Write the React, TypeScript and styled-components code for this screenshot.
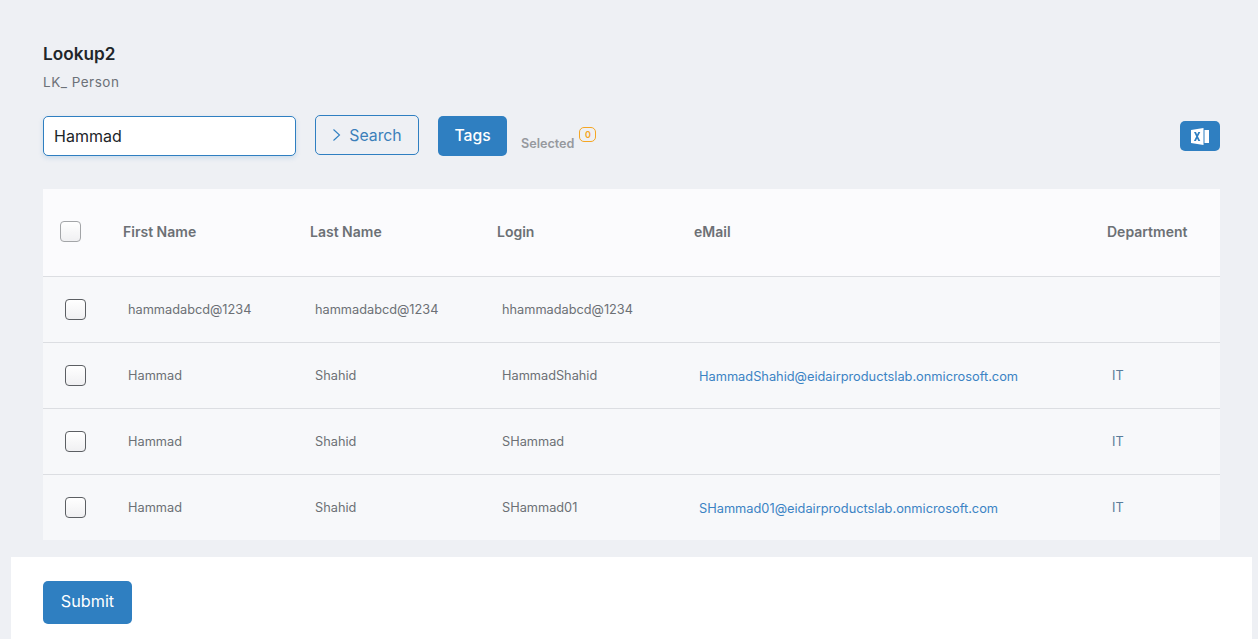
import React from "react";
import styled, { createGlobalStyle } from "styled-components";

const Global = createGlobalStyle`
  html, body { margin: 0; padding: 0; background: #eef0f4; }
  body { font-family: Inter, "Liberation Sans", sans-serif; overflow: hidden; }
  * { box-sizing: border-box; }
`;

const Page = styled.div`
  width: 1258px;
  height: 639px;
  display: flex;
  flex-direction: column;
  background: #eef0f4;
  overflow: hidden;
`;
const Content = styled.main`
  height: 557px;
  padding: 44px 38px 0 43px;
`;
const Title = styled.h1`
  margin: 0;
  font-size: 17.2px;
  line-height: 20px;
  font-weight: 600;
  color: #212529;
`;
const Subtitle = styled.p`
  margin: 9px 0 0;
  font-size: 13.5px;
  line-height: 18px;
  letter-spacing: 0.5px;
  color: #6c7178;
`;
const Toolbar = styled.div`
  display: flex;
  align-items: flex-start;
  margin-top: 24px;
  height: 41px;
`;
const SearchInput = styled.input`
  width: 253px;
  height: 40px;
  margin-top: 1px;
  padding: 0 10px;
  border: 1px solid #2f7fc1;
  border-radius: 5px;
  background: #fff;
  font: 400 16px Inter, sans-serif;
  color: #212529;
  box-shadow: 0 2px 5px rgba(47, 127, 193, 0.18);
  outline: none;
`;
const SearchButton = styled.button`
  width: 104px;
  height: 40px;
  margin-left: 19px;
  display: flex;
  align-items: center;
  justify-content: center;
  gap: 8px;
  border: 1px solid #2f7fc1;
  border-radius: 5px;
  background: transparent;
  color: #3b7fba;
  font: 400 15.8px Inter, sans-serif;
`;
const TagsButton = styled.button`
  width: 69px;
  height: 40px;
  margin: 1px 0 0 19px;
  padding: 0 0 2px;
  border: 0;
  border-radius: 5px;
  background: #2f7fc1;
  color: #fff;
  font: 500 15.7px Inter, sans-serif;
`;
const SelectedWrap = styled.div`
  display: flex;
  align-items: flex-start;
  margin: 13px 0 0 14px;
`;
const SelectedLabel = styled.span`
  margin-top: 8px;
  font-size: 12.6px;
  line-height: 15px;
  font-weight: 600;
  color: #96999e;
`;
const Badge = styled.span`
  width: 17px;
  height: 15px;
  margin: -1px 0 0 5px;
  border: 1px solid #f5a623;
  border-radius: 5px;
  color: #f5a623;
  font-size: 9px;
  font-weight: 600;
  line-height: 13px;
  text-align: center;
`;
const ExcelButton = styled.button`
  width: 40px;
  height: 30px;
  margin: 6px 0 0 auto;
  padding: 0 1px 0 0;
  display: flex;
  align-items: center;
  justify-content: center;
  border: 0;
  border-radius: 5px;
  background: #2f7fc1;
`;
const Table = styled.table`
  width: 1177px;
  margin-top: 33px;
  border-collapse: collapse;
  table-layout: fixed;
`;
const HeadRow = styled.tr`
  height: 87px;
  background: #fbfbfd;
`;
const Row = styled.tr`
  height: 66px;
  background: #f7f8fa;
  border-top: 1px solid #dcdee2;
`;
const Th = styled.th`
  padding: 0 0 2px;
  text-align: left;
  font-size: 14px;
  font-weight: 600;
  color: #6c7075;
`;
const Td = styled.td`
  padding: 0 0 0 5px;
  font-size: 12.75px;
  color: #6c7075;
`;
const CheckCell = styled.td`
  padding: 0;
`;
const MailCell = styled.td`
  padding: 2px 0 0 5px;
  font-size: 12.8px;
  color: #3b83c4;
`;
const DeptCell = styled.td`
  padding: 0 0 0 5px;
  font-size: 12.75px;
  color: #5a7c99;
`;
const Check = styled.span<{ $head?: boolean }>`
  display: block;
  width: 21px;
  height: 21px;
  margin-left: ${(p) => (p.$head ? "17px" : "22px")};
  border: 1px solid ${(p) => (p.$head ? "#a3a5a8" : "#5c5f63")};
  border-radius: 4px;
  background: linear-gradient(#ffffff, #f0f0f2);
`;
const Footer = styled.footer`
  height: 82px;
  margin: 0 6px 0 11px;
  padding: 24px 32px;
  background: #fff;
`;
const Submit = styled.button`
  width: 89px;
  height: 43px;
  padding: 0 0 3px;
  border: 0;
  border-radius: 5px;
  background: #2f7fc1;
  color: #fff;
  font: 400 16.2px Inter, sans-serif;
`;

const rows = [
  ["hammadabcd@1234", "hammadabcd@1234", "hhammadabcd@1234", "", ""],
  ["Hammad", "Shahid", "HammadShahid", "HammadShahid@eidairproductslab.onmicrosoft.com", "IT"],
  ["Hammad", "Shahid", "SHammad", "", "IT"],
  ["Hammad", "Shahid", "SHammad01", "SHammad01@eidairproductslab.onmicrosoft.com", "IT"],
];

export default function App() {
  return (
    <Page>
      <Global />
      <Content>
        <Title>Lookup2</Title>
        <Subtitle>LK_ Person</Subtitle>
        <Toolbar>
          <SearchInput defaultValue="Hammad" />
          <SearchButton>
            <svg width="9" height="14" viewBox="0 0 9 14" fill="none" stroke="#2f7fc1" strokeWidth="1.1">
              <path d="M1.5 1.5 7.5 7l-6 5.5" />
            </svg>
            Search
          </SearchButton>
          <TagsButton>Tags</TagsButton>
          <SelectedWrap>
            <SelectedLabel>Selected</SelectedLabel>
            <Badge>0</Badge>
          </SelectedWrap>
          <ExcelButton aria-label="Export to Excel">
            <svg width="18" height="17" viewBox="0 0 18 17">
              <path d="M0 2 12.5 0v17L0 15z" fill="#fff" />
              <rect x="13.5" y="2" width="4.5" height="13" fill="#fff" />
              <path d="M3 4h2l1.100 2.500L7.300 4H9.300L7 8.500l2.300 4.500H7.300L6.100 10.400 4.900 13H2.900L5.200 8.500z" fill="#2f7fc1" />
            </svg>
          </ExcelButton>
        </Toolbar>
        <Table>
          <colgroup>
            <col width="80" />
            <col width="187" />
            <col width="187" />
            <col width="197" />
            <col width="413" />
            <col width="113" />
          </colgroup>
          <thead>
            <HeadRow>
              <Th><Check $head /></Th>
              <Th>First Name</Th>
              <Th>Last Name</Th>
              <Th>Login</Th>
              <Th>eMail</Th>
              <Th>Department</Th>
            </HeadRow>
          </thead>
          <tbody>
            {rows.map((r, i) => (
              <Row key={i}>
                <CheckCell><Check /></CheckCell>
                <Td>{r[0]}</Td>
                <Td>{r[1]}</Td>
                <Td>{r[2]}</Td>
                <MailCell>{r[3]}</MailCell>
                <DeptCell>{r[4]}</DeptCell>
              </Row>
            ))}
          </tbody>
        </Table>
      </Content>
      <Footer>
        <Submit>Submit</Submit>
      </Footer>
    </Page>
  );
}
